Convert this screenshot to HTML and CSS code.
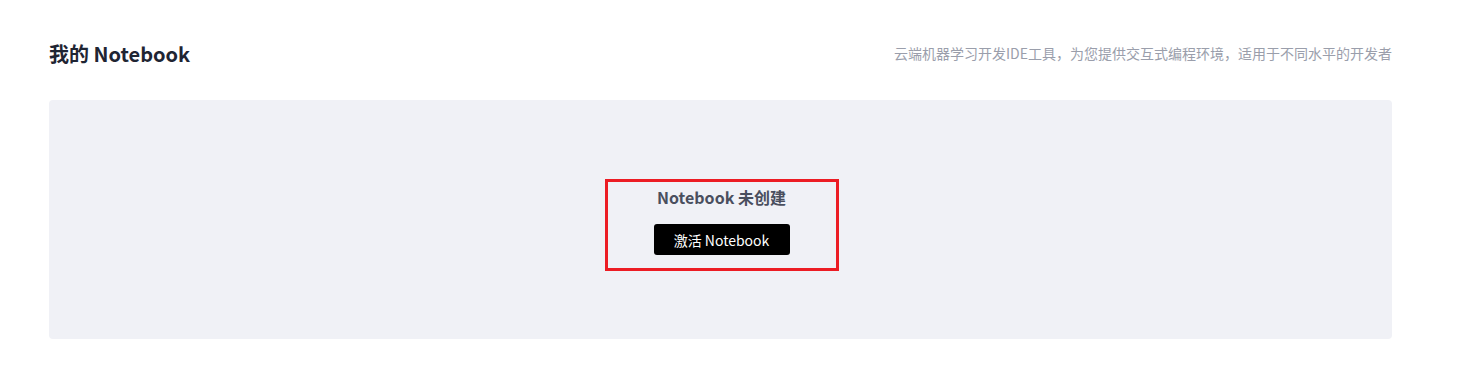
FILE: index.html
```html
<!DOCTYPE html>
<html lang="zh-CN">

<head>
    <meta charset="UTF-8">
    <meta name="viewport" content="width=device-width, initial-scale=1.0">
    <title>我的 Notebook</title>
    <link rel="stylesheet" href="styles.css">
</head>

<body>
    <div class="page">
        <!-- header -->
        <div class="header">
            <h1 class="title">我的 Notebook</h1>
            <div class="desc">云端机器学习开发IDE工具，为您提供交互式编程环境，适用于不同水平的开发者</div>
        </div>

        <!-- empty state -->
        <div class="panel">
            <div class="empty">
                <div class="empty-text">Notebook 未创建</div>
                <button class="btn">激活 Notebook</button>
            </div>
        </div>
    </div>
</body>

</html>
```

FILE: styles.css
```css
body {
    margin: 0;
    background-color: #fff;
    font-family: "Noto Sans CJK SC", "Noto Sans", sans-serif;
}

.page {
    width: 1343px;
    margin-left: 49px;
    padding-top: 37px;
}

.header {
    display: flex;
    justify-content: space-between;
    align-items: center;
    height: 32px;
}

.title {
    margin: 0;
    font-size: 20px;
    font-weight: 700;
    color: #1f2533;
}

.desc {
    font-size: 14px;
    color: #9a9eab;
}

.panel {
    box-sizing: border-box;
    margin-top: 31px;
    height: 239px;
    padding-top: 79px;
    background-color: #f0f1f6;
    border-radius: 4px;
    display: flex;
    justify-content: center;
    align-items: flex-start;
}

.empty {
    box-sizing: border-box;
    width: 234px;
    height: 92px;
    margin-left: 2px;
    border: 3px solid #ec1c24;
    padding-top: 3px;
    display: flex;
    flex-direction: column;
    align-items: center;
}

.empty-text {
    font-size: 16px;
    line-height: 24px;
    font-weight: 700;
    color: #4a4f5e;
}

.btn {
    margin-top: 15px;
    width: 136px;
    height: 31px;
    border: none;
    border-radius: 3px;
    background-color: #000;
    color: #fff;
    font-family: inherit;
    font-size: 14px;
    cursor: pointer;
}
```
